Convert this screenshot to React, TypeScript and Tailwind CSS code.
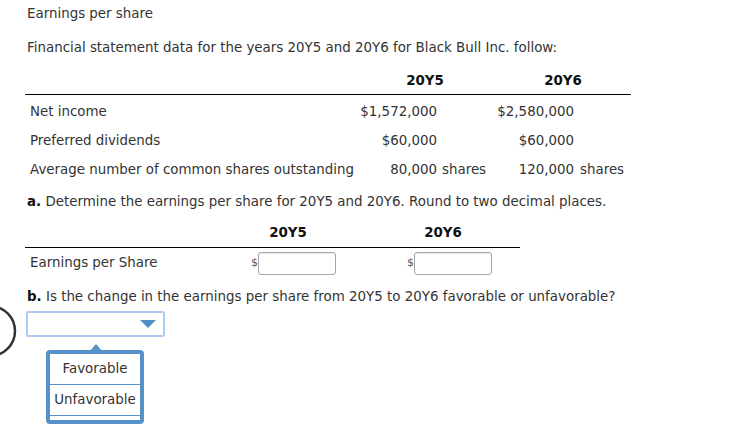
const rows = [
  { label: 'Net income', a: '$1,572,000', b: '$2,580,000', unit: '' },
  { label: 'Preferred dividends', a: '$60,000', b: '$60,000', unit: '' },
  { label: 'Average number of common shares outstanding', a: '80,000', b: '120,000', unit: 'shares' },
];

const DollarInput = () => (
  <div className="flex items-center pl-[41px]">
    <span className="text-[11px] text-[#555]">$</span>
    <input
      type="text"
      className="h-[23px] w-[78px] rounded-[3px] border border-[#a6a6a6] bg-white shadow-[inset_0_1px_1px_rgba(0,0,0,0.08)] outline-none"
    />
  </div>
);

export default function App() {
  return (
    <div className="relative h-[430px] w-[742px] overflow-hidden bg-white pl-[25px] text-[13.4px] text-[#333] [font-family:'DejaVu_Sans',Verdana,sans-serif]">
      {/* circle cut off at left edge */}
      <svg className="absolute left-0 top-[303px]" width="20" height="56" viewBox="0 0 20 56">
        <circle cx="-10" cy="28" r="25" fill="none" stroke="#333" strokeWidth="2.5" />
      </svg>

      <p className="pl-[2px] pt-[5px] leading-[18px]">Earnings per share</p>
      <p className="pl-[2px] pt-[16px] leading-[18px]">
        Financial statement data for the years 20Y5 and 20Y6 for Black Bull Inc. follow:
      </p>

      <div className="mt-[12px] w-[606px]">
        <div className="grid h-[26px] grid-cols-[330px_140px_136px] items-center border-b border-black font-bold text-[#111]">
          <span />
          <span className="text-center">20Y5</span>
          <span className="text-center">20Y6</span>
        </div>
        {rows.map((r) => (
          <div
            key={r.label}
            className="grid h-[29px] grid-cols-[330px_82px_58px_79px_57px] items-center pt-[5px]"
          >
            <span className="pl-[5px]">{r.label}</span>
            <span className="text-right">{r.a}</span>
            <span className="pl-[5px]">{r.unit}</span>
            <span className="text-right">{r.b}</span>
            <span className="pl-[6px]">{r.unit}</span>
          </div>
        ))}
      </div>

      <p className="pl-[2px] pt-[11px] leading-[18px]">
        <b className="text-[#111]">a.</b> Determine the earnings per share for 20Y5 and 20Y6. Round to two decimal places.
      </p>

      <div className="mt-[8px] w-[495px]">
        <div className="grid h-[29px] grid-cols-[185px_156px_154px] items-center border-b border-black font-bold text-[#111]">
          <span />
          <span className="text-center">20Y5</span>
          <span className="text-center">20Y6</span>
        </div>
        <div className="grid h-[30px] grid-cols-[185px_156px_154px] items-center">
          <span className="pl-[5px]">Earnings per Share</span>
          <DollarInput />
          <DollarInput />
        </div>
      </div>

      <p className="pl-[2px] pt-[10px] leading-[18px]">
        <b className="text-[#111]">b.</b> Is the change in the earnings per share from 20Y5 to 20Y6 favorable or unfavorable?
      </p>

      <div className="relative mt-[5px] ml-[1px] flex h-[26px] w-[139px] items-center justify-end rounded-[2px] border-2 border-[#a9cdf3] bg-white pr-[7px]">
        <svg width="16" height="8" viewBox="0 0 16 8">
          <polygon points="0,0 16,0 8,8" fill="#4f8fc6" />
        </svg>
      </div>

      <div className="relative ml-[21px] mt-[13px] w-[98px] rounded-[4px] border-4 border-[#5592c8] bg-white">
        <svg className="absolute left-[40px] top-[-10px]" width="12" height="7" viewBox="0 0 12 7">
          <polygon points="0,7 6,0 12,7" fill="#5592c8" />
        </svg>
        <div className="flex h-[31px] items-center justify-center border-b border-[#5592c8]">Favorable</div>
        <div className="flex h-[31px] items-center justify-center border-b border-[#5592c8]">Unfavorable</div>
        <div className="h-[4px]" />
      </div>
    </div>
  );
}
